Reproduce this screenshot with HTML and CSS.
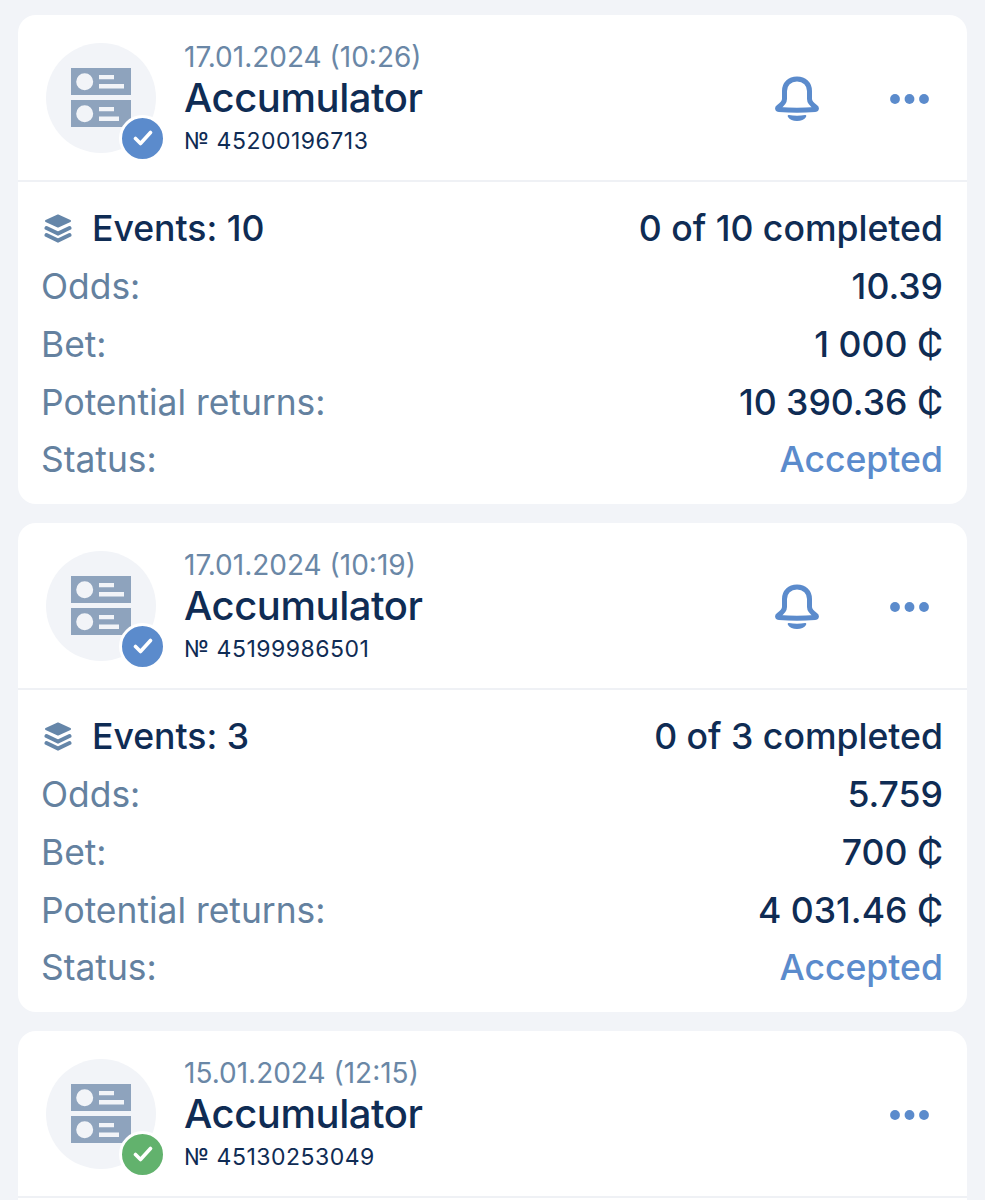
FILE: index.html
```html
<!DOCTYPE html>
<html lang="en">
<head>
<meta charset="utf-8">
<title>Bets</title>
<link rel="stylesheet" href="styles.css">
</head>
<body>
<svg class="defs" width="0" height="0" aria-hidden="true">
  <symbol id="coupon" viewBox="0 0 60 59">
    <path fill="#8ea3bd" fill-rule="evenodd" d="M0 0H60V27H0ZM13.700 5.200A8.500 8.500 0 1 0 13.700 22.200A8.500 8.500 0 1 0 13.700 5.200ZM28 7V11.300H43V7ZM28 16V20.500H53V16Z"/>
    <path fill="#8ea3bd" fill-rule="evenodd" d="M0 32H60V59H0ZM13.700 37.200A8.500 8.500 0 1 0 13.700 54.200A8.500 8.500 0 1 0 13.700 37.200ZM28 39V43.300H43V39ZM28 48.500V53H48V48.500Z"/>
  </symbol>
  <symbol id="bell" viewBox="0 0 44 46">
    <path fill="none" stroke="currentColor" stroke-width="5" stroke-linejoin="round" d="M22 3C14.500 3 9.500 8 9.500 15V23C9.500 27 6.500 29 3.500 31C2 32 2.500 33.500 4 33.500C15 34.500 29 34.500 40 33.500C41.500 33.500 42 32 40.500 31C37.500 29 34.500 27 34.500 23V15C34.500 8 29.500 3 22 3Z"/>
    <path fill="currentColor" d="M14 39C19 40 25 40 30 39C31.500 38.700 31.500 40 31 41C29.500 43.800 26 45 22 45C18 45 14.500 43.800 13 41C12.500 40 12.500 38.700 14 39Z"/>
  </symbol>
  <symbol id="dots" viewBox="0 0 39 10">
    <circle cx="5" cy="5" r="4.900" fill="currentColor"/>
    <circle cx="19.500" cy="5" r="4.900" fill="currentColor"/>
    <circle cx="34" cy="5" r="4.900" fill="currentColor"/>
  </symbol>
  <symbol id="layers" viewBox="0 0 28 29">
    <path fill="#6586a9" stroke="#6586a9" stroke-width="2" stroke-linejoin="round" d="M14 1.500L26 7L14 12.500L2 7Z"/>
    <path fill="none" stroke="#6586a9" stroke-width="4" stroke-linecap="round" d="M2.500 14L14 19.500L25.500 14"/>
    <path fill="none" stroke="#6586a9" stroke-width="4" stroke-linecap="round" d="M2.500 21L14 26.500L25.500 21"/>
  </symbol>
  <symbol id="check" viewBox="0 0 20 16">
    <path fill="none" stroke="#fff" stroke-width="3.600" stroke-linecap="round" stroke-linejoin="round" d="M2.500 8.500L7.500 13.500L17.500 2.500"/>
  </symbol>
</svg>

<main class="list">
  <article class="card">
    <header class="head">
      <div class="avatar">
        <svg class="coupon"><use href="#coupon"/></svg>
        <span class="badge"><svg class="check"><use href="#check"/></svg></span>
      </div>
      <div class="info">
        <div class="date">17.01.2024 (10:26)</div>
        <div class="title">Accumulator</div>
        <div class="number">№ 45200196713</div>
      </div>
      <svg class="bell"><use href="#bell"/></svg>
      <svg class="dots"><use href="#dots"/></svg>
    </header>
    <div class="body">
      <div class="row"><span class="events"><svg class="layers"><use href="#layers"/></svg>Events: 10</span><span class="value">0 of 10 completed</span></div>
      <div class="row"><span class="label">Odds:</span><span class="value">10.39</span></div>
      <div class="row"><span class="label">Bet:</span><span class="value">1 000 ₵</span></div>
      <div class="row"><span class="label">Potential returns:</span><span class="value">10 390.36 ₵</span></div>
      <div class="row"><span class="label">Status:</span><span class="status">Accepted</span></div>
    </div>
  </article>

  <article class="card">
    <header class="head">
      <div class="avatar">
        <svg class="coupon"><use href="#coupon"/></svg>
        <span class="badge"><svg class="check"><use href="#check"/></svg></span>
      </div>
      <div class="info">
        <div class="date">17.01.2024 (10:19)</div>
        <div class="title">Accumulator</div>
        <div class="number">№ 45199986501</div>
      </div>
      <svg class="bell"><use href="#bell"/></svg>
      <svg class="dots"><use href="#dots"/></svg>
    </header>
    <div class="body">
      <div class="row"><span class="events"><svg class="layers"><use href="#layers"/></svg>Events: 3</span><span class="value">0 of 3 completed</span></div>
      <div class="row"><span class="label">Odds:</span><span class="value">5.759</span></div>
      <div class="row"><span class="label">Bet:</span><span class="value">700 ₵</span></div>
      <div class="row"><span class="label">Potential returns:</span><span class="value">4 031.46 ₵</span></div>
      <div class="row"><span class="label">Status:</span><span class="status">Accepted</span></div>
    </div>
  </article>

  <article class="card">
    <header class="head">
      <div class="avatar">
        <svg class="coupon"><use href="#coupon"/></svg>
        <span class="badge badge-won"><svg class="check"><use href="#check"/></svg></span>
      </div>
      <div class="info">
        <div class="date">15.01.2024 (12:15)</div>
        <div class="title">Accumulator</div>
        <div class="number">№ 45130253049</div>
      </div>
      <svg class="dots"><use href="#dots"/></svg>
    </header>
    <div class="body body-clipped"></div>
  </article>
</main>
</body>
</html>
```

FILE: styles.css
```css
html, body {
  margin: 0;
  height: 1200px;
  overflow: hidden;
  background: #f2f4f8;
}

body {
  font-family: Inter, "Liberation Sans", sans-serif;
  color: #0f2c54;
}

.defs {
  position: absolute;
}

.list {
  display: flex;
  flex-direction: column;
  gap: 19px;
  height: 1185px;
  overflow: hidden;
  padding: 15px 18px 0;
}

.card {
  background: #fff;
  border-radius: 18px;
  flex: none;
}

.head {
  display: flex;
  align-items: center;
  height: 165px;
  padding: 0 38px 0 28px;
  border-bottom: 2px solid #eff1f5;
  color: #5b8bcc;
}

.avatar {
  position: relative;
  flex: none;
  display: flex;
  align-items: center;
  justify-content: center;
  width: 110px;
  height: 110px;
  border-radius: 50%;
  background: #f2f4f8;
}

.coupon {
  width: 60px;
  height: 59px;
}

.badge {
  position: absolute;
  left: 73px;
  top: 72px;
  display: flex;
  align-items: center;
  justify-content: center;
  width: 41px;
  height: 41px;
  border: 3px solid #fff;
  border-radius: 50%;
  background: #5b8bcc;
}

.badge-won {
  background: #62b26d;
}

.check {
  width: 20px;
  height: 16px;
}

.info {
  flex: 1;
  margin-left: 28px;
  margin-top: 2px;
  display: flex;
  flex-direction: column;
}

.date {
  font-size: 28px;
  line-height: 30px;
  color: #6a87a6;
}

.title {
  font-size: 40px;
  line-height: 48px;
  font-weight: 500;
  letter-spacing: -0.45px;
  color: #0f2c54;
  margin-top: 2px;
}

.number {
  font-size: 23px;
  line-height: 30px;
  letter-spacing: 0.5px;
  color: #0f2c54;
  margin-top: 4px;
}

.bell {
  width: 44px;
  height: 46px;
  margin: 3px 71px 0 0;
}

.dots {
  width: 39px;
  height: 10px;
  margin-top: 3px;
}

.body {
  padding: 18px 24px 15.250px;
}

.body-clipped {
  height: 300px;
}

.row {
  display: flex;
  justify-content: space-between;
  align-items: center;
  height: 57.750px;
  font-size: 35.600px;
}

.events {
  display: flex;
  align-items: center;
  gap: 20px;
  margin-left: 2px;
  font-weight: 450;
}

.layers {
  width: 28px;
  height: 29px;
}

.label {
  color: #64819f;
  font-size: 35.400px;
  margin-left: -1px;
}

.value {
  font-weight: 450;
}

.status {
  color: #5b8bcc;
  font-weight: 450;
}
```
